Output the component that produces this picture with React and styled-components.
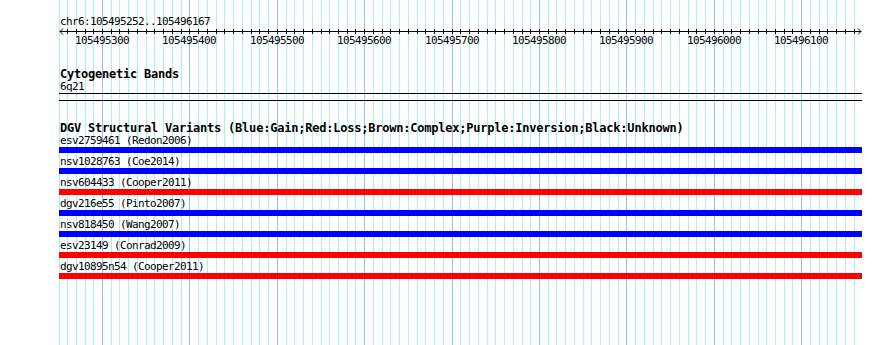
import React from "react";
import styled, { createGlobalStyle } from "styled-components";

const GlobalStyle = createGlobalStyle`
  html, body { margin: 0; padding: 0; background: #ffffff; }
  body { font-family: "DejaVu Sans Mono", "Liberation Mono", monospace; color: #000; }
`;

const START = 105495252;
const END = 105496167;
const ORIGIN = 59; // panel left in page px
const PANEL_W = 803;
const PAGE_H = 345;

// grid position k (10bp steps) relative to 105495300
const gx = (k) => Math.max(59, Math.round(102 + k * 8.74));
const KS = [];
for (let k = -5; k <= 86; k++) KS.push(k);

const variants = [
  { id: "esv2759461", src: "Redon2006", kind: "gain" },
  { id: "nsv1028763", src: "Coe2014", kind: "gain" },
  { id: "nsv604433", src: "Cooper2011", kind: "loss" },
  { id: "dgv216e55", src: "Pinto2007", kind: "gain" },
  { id: "nsv818450", src: "Wang2007", kind: "gain" },
  { id: "esv23149", src: "Conrad2009", kind: "loss" },
  { id: "dgv10895n54", src: "Cooper2011", kind: "loss" },
];

const Page = styled.div`
  position: relative;
  width: 890px;
  height: ${PAGE_H}px;
  overflow: hidden;
  background: #fff;
`;

const GridLayer = styled.svg`
  position: absolute;
  left: 0;
  top: 0;
  z-index: 0;
  pointer-events: none;
`;

const Panel = styled.div`
  position: relative;
  z-index: 1;
  margin-left: ${ORIGIN}px;
  width: ${PANEL_W}px;
  padding-top: 15px;
  display: flex;
  flex-direction: column;
`;

const SmallText = styled.div`
  font-family: "DejaVu Sans Mono", "Liberation Mono", monospace;
  font-size: 11px;
  letter-spacing: -0.62px;
  line-height: ${(p) => p.$lh || 13}px;
  height: ${(p) => p.$lh || 13}px;
  padding-left: 1px;
  white-space: nowrap;
`;

const TrackTitle = styled.div`
  font-family: "DejaVu Sans Mono", "Liberation Mono", monospace;
  font-weight: bold;
  font-size: 12px;
  letter-spacing: -0.22px;
  line-height: ${(p) => p.$lh}px;
  height: ${(p) => p.$lh}px;
  margin-top: ${(p) => p.$mt}px;
  padding-left: 1px;
  white-space: nowrap;
`;

const RulerSvg = styled.svg`
  display: block;
  overflow: visible;
`;

const RuleLine = styled.div`
  height: 1px;
  background: #000;
  margin-top: ${(p) => p.$mt || 0}px;
`;

const Row = styled.div`
  display: flex;
  flex-direction: column;
  margin-bottom: 2px;
`;

const Bar = styled.div`
  height: 6px;
  background: ${(p) => (p.$kind === "loss" ? "#ff0000" : "#0000ff")};
`;

function Grid() {
  return (
    <GridLayer width={890} height={PAGE_H} shapeRendering="crispEdges">
      {KS.map((k) => {
        const x = gx(k) + 0.5;
        const major = k % 10 === 0;
        return (
          <line
            key={k}
            x1={x}
            x2={x}
            y1={0}
            y2={PAGE_H}
            stroke={major ? "#8cc6e8" : "#aaeef2"}
            strokeWidth={1}
          />
        );
      })}
    </GridLayer>
  );
}

function Ruler() {
  const y = 3.5;
  const labels = [];
  for (let k = 0; k <= 80; k += 10) labels.push(k);
  const left = 60 - ORIGIN;
  const right = 861 - ORIGIN;
  return (
    <RulerSvg width={PANEL_W} height={20} shapeRendering="crispEdges">
      <line x1={left} x2={right} y1={y} y2={y} stroke="#000" />
      <line x1={left} y1={y} x2={left + 3} y2={y - 3} stroke="#000" shapeRendering="auto" />
      <line x1={left} y1={y} x2={left + 3} y2={y + 3} stroke="#000" shapeRendering="auto" />
      <line x1={right} y1={y} x2={right - 3} y2={y - 3} stroke="#000" shapeRendering="auto" />
      <line x1={right} y1={y} x2={right - 3} y2={y + 3} stroke="#000" shapeRendering="auto" />
      {KS.filter((k) => k >= -4).map((k) => {
        const x = gx(k) - ORIGIN + 0.5;
        return <line key={k} x1={x} x2={x} y1={1} y2={6} stroke="#000" />;
      })}
      {labels.map((k) => (
        <text
          key={k}
          x={gx(k) - ORIGIN}
          y={16}
          textAnchor="middle"
          fontFamily='"DejaVu Sans Mono", "Liberation Mono", monospace'
          fontSize="11"
          letterSpacing="-0.62"
          fill="#000"
        >
          {105495300 + k * 10}
        </text>
      ))}
    </RulerSvg>
  );
}

export default function App() {
  return (
    <>
      <GlobalStyle />
      <Page>
        <Grid />
        <Panel>
          <SmallText>{`chr6:${START}..${END}`}</SmallText>
          <Ruler />
          <TrackTitle $lh={12} $mt={20}>Cytogenetic Bands</TrackTitle>
          <SmallText>6q21</SmallText>
          <RuleLine />
          <RuleLine $mt={6} />
          <TrackTitle $lh={11} $mt={22}>
            DGV Structural Variants (Blue:Gain;Red:Loss;Brown:Complex;Purple:Inversion;Black:Unknown)
          </TrackTitle>
          {variants.map((v) => (
            <Row key={v.id}>
              <SmallText>{`${v.id} (${v.src})`}</SmallText>
              <Bar $kind={v.kind} />
            </Row>
          ))}
        </Panel>
      </Page>
    </>
  );
}
